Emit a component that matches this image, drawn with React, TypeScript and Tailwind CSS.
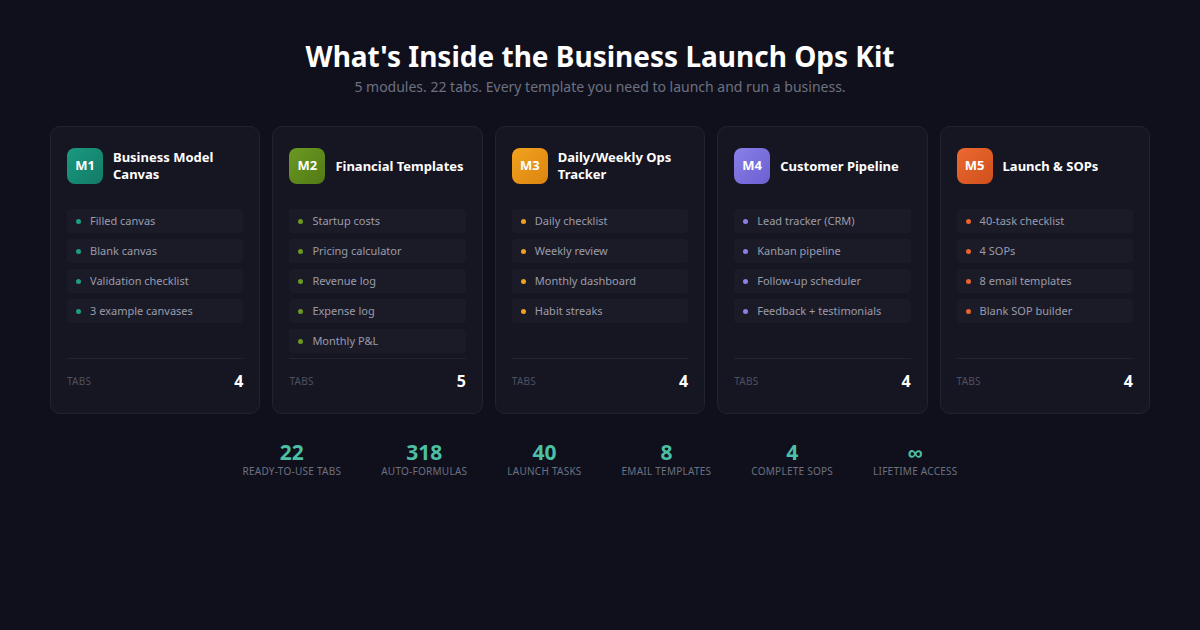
const modules = [
  { id: 'M1', title: 'Business Model Canvas', badge: 'bg-gradient-to-br from-[#1a9a80] to-[#137a68]', dot: 'bg-[#1f9c84]', items: ['Filled canvas', 'Blank canvas', 'Validation checklist', '3 example canvases'], tabs: 4 },
  { id: 'M2', title: 'Financial Templates', badge: 'bg-gradient-to-br from-[#6b9a22] to-[#527a16]', dot: 'bg-[#6b9a22]', items: ['Startup costs', 'Pricing calculator', 'Revenue log', 'Expense log', 'Monthly P&L'], tabs: 5 },
  { id: 'M3', title: 'Daily/Weekly Ops Tracker', badge: 'bg-gradient-to-br from-[#f2a21e] to-[#db8510]', dot: 'bg-[#f0a020]', items: ['Daily checklist', 'Weekly review', 'Monthly dashboard', 'Habit streaks'], tabs: 4 },
  { id: 'M4', title: 'Customer Pipeline', badge: 'bg-gradient-to-br from-[#8a80e8] to-[#6a5fd0]', dot: 'bg-[#8a80e8]', items: ['Lead tracker (CRM)', 'Kanban pipeline', 'Follow-up scheduler', 'Feedback + testimonials'], tabs: 4 },
  { id: 'M5', title: 'Launch & SOPs', badge: 'bg-gradient-to-br from-[#ec6a30] to-[#cf4f1c]', dot: 'bg-[#e8652c]', items: ['40-task checklist', '4 SOPs', '8 email templates', 'Blank SOP builder'], tabs: 4 },
];

const stats = [
  ['22', 'Ready-to-use tabs'],
  ['318', 'Auto-formulas'],
  ['40', 'Launch tasks'],
  ['8', 'Email templates'],
  ['4', 'Complete SOPs'],
  ['∞', 'Lifetime access'],
];

export default function App() {
  return (
    <div className="flex h-[630px] w-[1200px] flex-col items-center bg-[#10101c] font-['Liberation_Sans',Arial,sans-serif]">
      <h1 className="mt-[38px] text-[28px] font-bold leading-[36px] text-white">What's Inside the Business Launch Ops Kit</h1>
      <p className="mt-[4px] text-[14px] leading-[18px] text-[#6c7080]">5 modules. 22 tabs. Every template you need to launch and run a business.</p>
      <div className="mt-[30px] grid w-[1100px] grid-cols-5 gap-[12px]">
        {modules.map((m) => (
          <div key={m.id} className="flex h-[288px] flex-col rounded-[10px] border border-[#22232f] bg-[#161622] px-[16px] pb-[20px] pt-[20px]">
            <div className="flex h-[38px] items-center gap-[10px]">
              <div className={`flex h-[36px] w-[36px] shrink-0 items-center justify-center rounded-[8px] text-[13px] font-bold text-white ${m.badge}`}>{m.id}</div>
              <div className="text-[13px] font-bold leading-[17px] text-white">{m.title}</div>
            </div>
            <div className="mt-[24px] flex flex-1 flex-col gap-[6px]">
              {m.items.map((it) => (
                <div key={it} className="flex h-[24px] items-center gap-[9px] rounded-[4px] bg-[#1b1b28] px-[9px] text-[11px] text-[#9a9caa]">
                  <span className={`h-[5px] w-[5px] rounded-full ${m.dot}`} />
                  {it}
                </div>
              ))}
            </div>
            <div className="flex items-center justify-between border-t border-[#22232f] pt-[10px]">
              <span className="text-[10px] uppercase tracking-wide text-[#4e5060]">Tabs</span>
              <span className="text-[16px] font-bold text-white">{m.tabs}</span>
            </div>
          </div>
        ))}
      </div>
      <div className="mt-[26px] flex gap-[40px]">
        {stats.map(([n, l]) => (
          <div key={l} className="flex flex-col items-center">
            <span className="text-[21px] font-bold leading-[24px] text-[#4cbfa4]">{n}</span>
            <span className="text-[10px] uppercase leading-[14px] tracking-wide text-[#6c7080]">{l}</span>
          </div>
        ))}
      </div>
    </div>
  );
}
